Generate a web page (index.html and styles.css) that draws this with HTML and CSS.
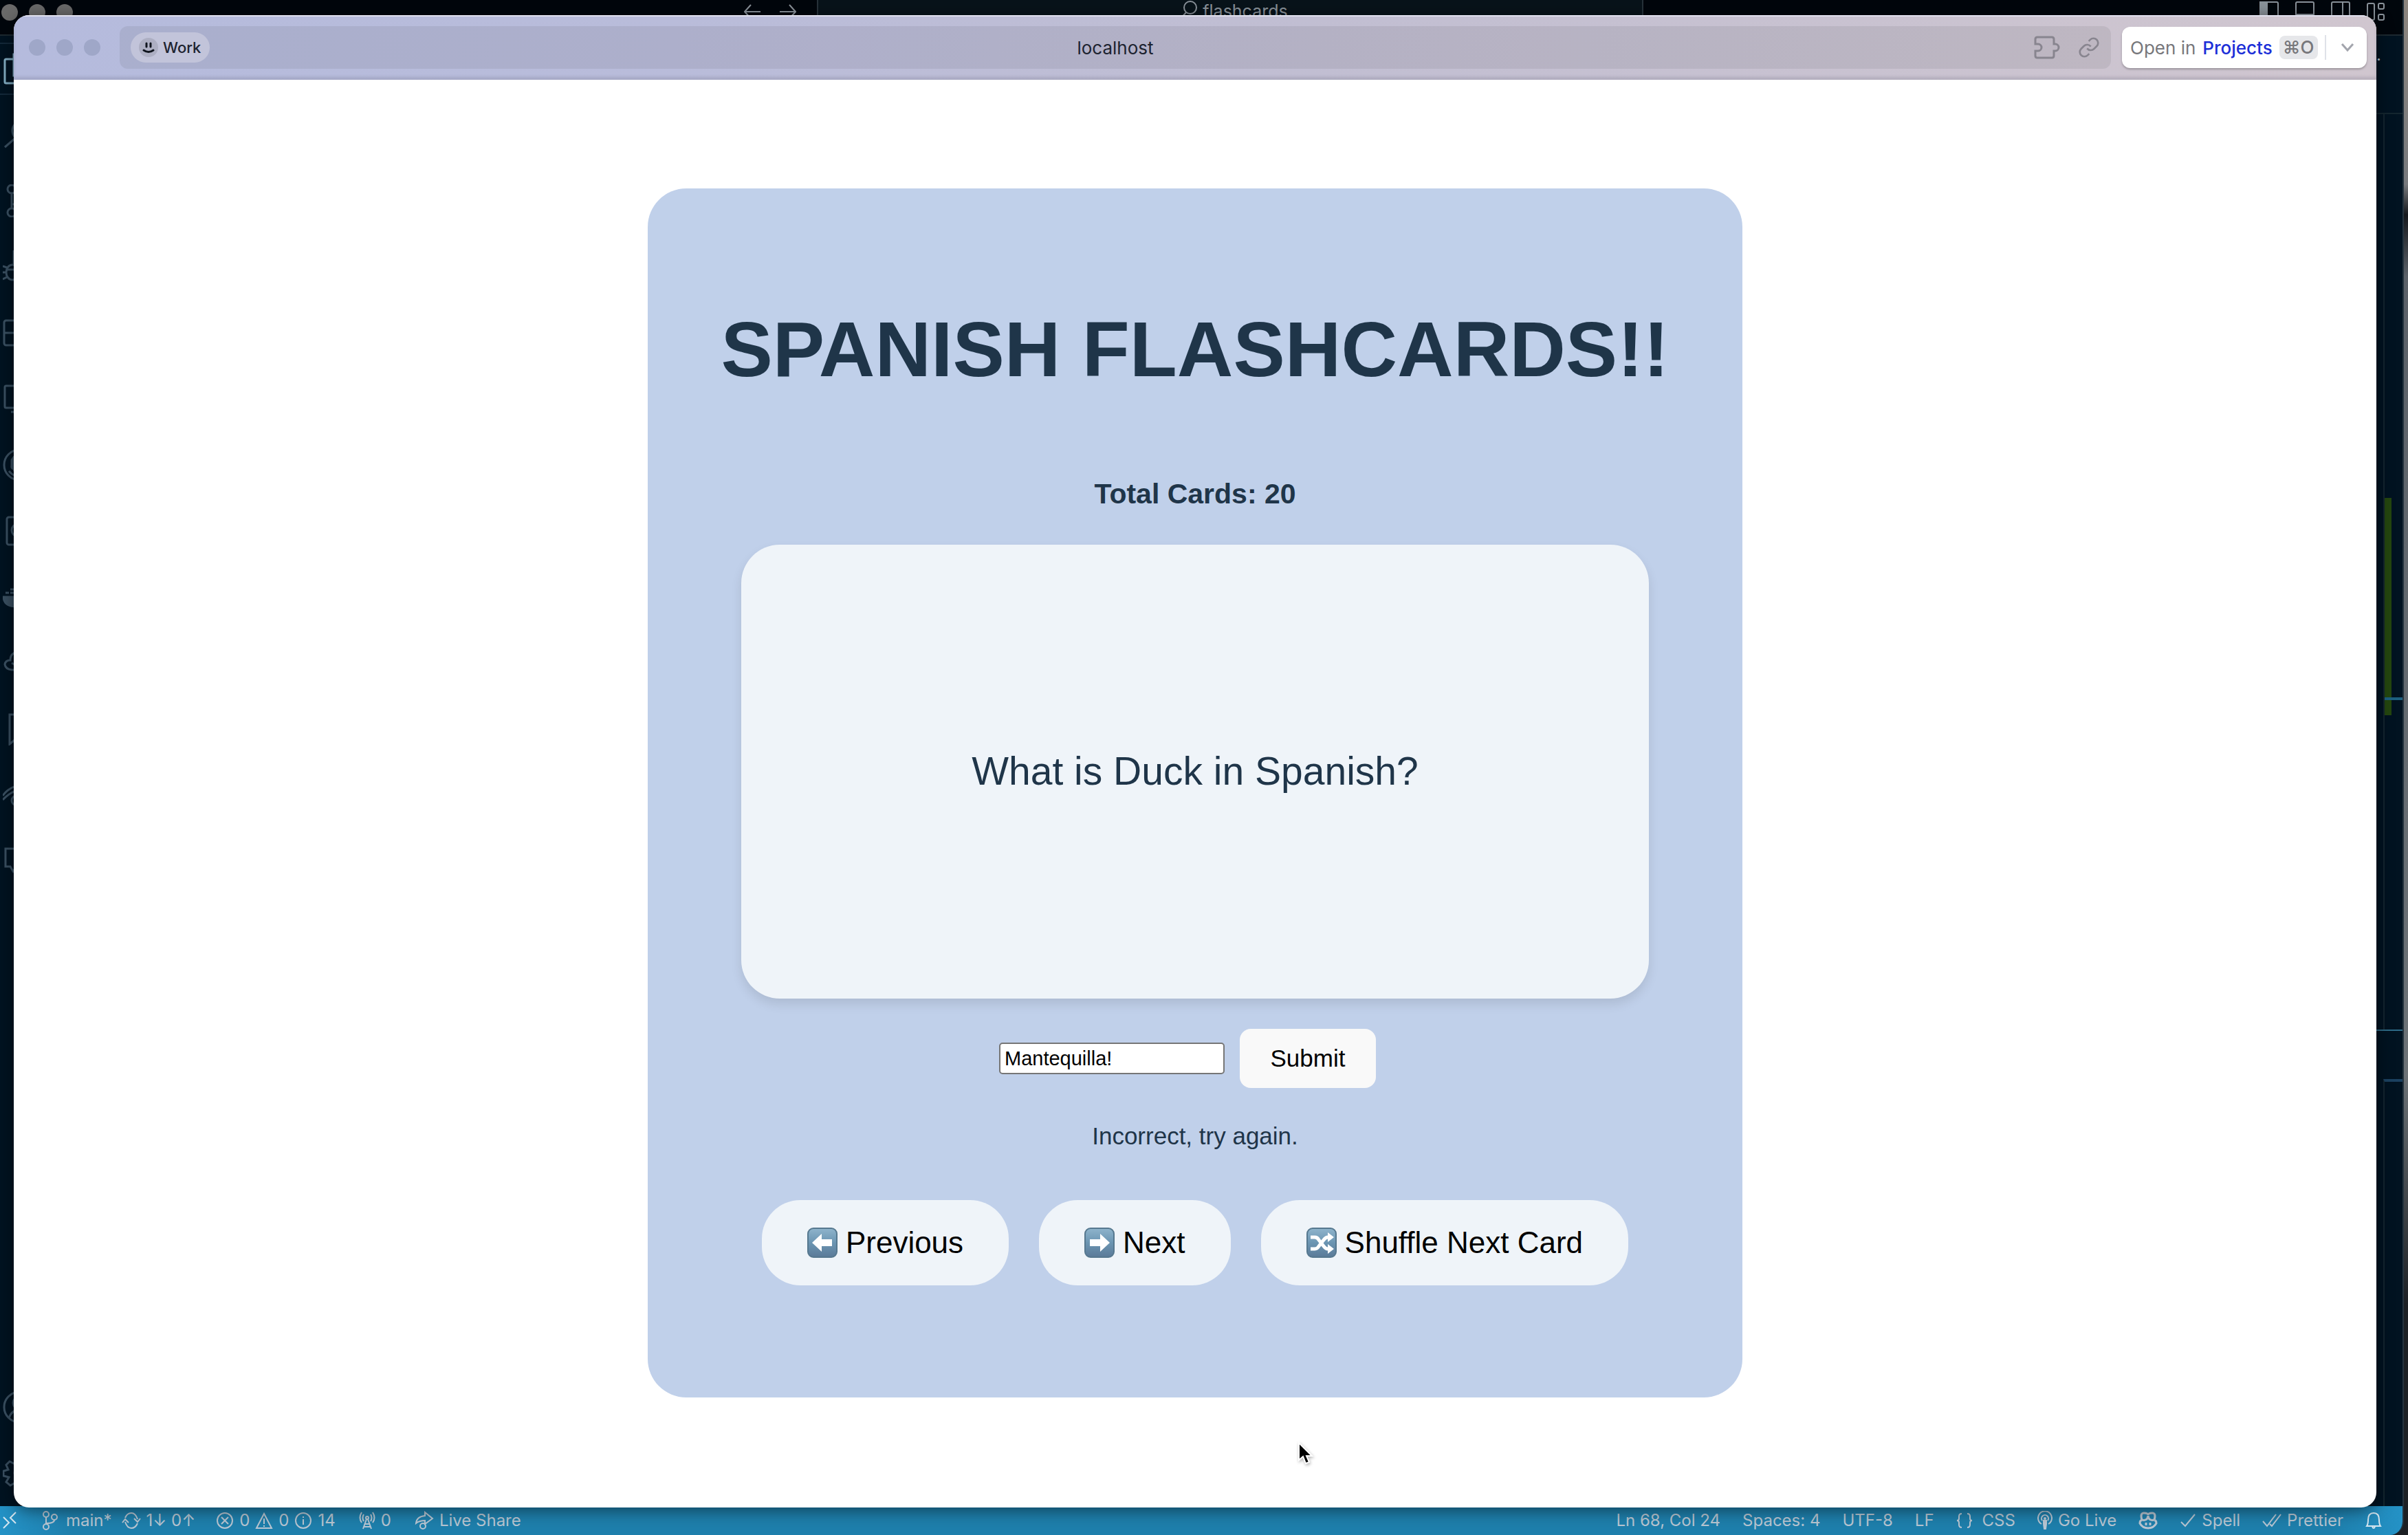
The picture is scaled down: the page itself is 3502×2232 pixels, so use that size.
FILE: index.html
```html
<!DOCTYPE html>
<html lang="en">
<head>
<meta charset="utf-8">
<title>localhost</title>
<meta name="viewport" content="width=device-width, initial-scale=1">
<link rel="stylesheet" href="styles.css">
</head>
<body>
<div class="editor">
  <header class="editor-title">
    <div class="lights"><i></i><i></i><i></i></div>
    <div class="editor-nav">
      <svg width="24" height="24" viewBox="0 0 24 24"><path d="M10 2 1 12l9 10M1 12h23"/></svg>
      <svg width="24" height="24" viewBox="0 0 24 24"><path d="m14 2 9 10-9 10M23 12H0"/></svg>
    </div>
    <div class="command-center">
      <svg width="24" height="28" viewBox="0 0 24 28"><circle cx="14" cy="11" r="9"/><path d="M8 18 1 26"/></svg>
      <span>flashcards</span>
    </div>
    <div class="layout-icons">
      <svg width="28" height="28" viewBox="0 0 28 28"><rect x="1" y="1" width="26" height="26" rx="2"/><path class="solid" d="M1 1h10v26H1z"/></svg>
      <svg width="28" height="28" viewBox="0 0 28 28"><rect x="1" y="1" width="26" height="26" rx="2"/><path d="M1 19h26"/></svg>
      <svg width="28" height="28" viewBox="0 0 28 28"><rect x="1" y="1" width="26" height="26" rx="2"/><path d="M17 1v26"/></svg>
      <svg width="28" height="28" viewBox="0 0 28 28"><rect x="1" y="3" width="10" height="24" rx="2"/><rect x="17" y="3" width="8" height="8" rx="2"/><rect x="17" y="19" width="8" height="8" rx="2"/></svg>
    </div>
  </header>
  <div class="editor-body">
    <nav class="rail">
      <div class="rail-item active"><svg viewBox="0 0 48 48"><path d="M16 10H5q-2 0-2 2v31q0 2 2 2h26V34M16 34V3h16l10 10v21z"/></svg></div>
      <div class="rail-item"><svg viewBox="0 0 48 48"><circle cx="28" cy="18" r="14"/><path d="M18 29 3 42"/></svg></div>
      <div class="rail-item"><svg viewBox="0 0 48 48"><circle cx="13" cy="7" r="6"/><circle cx="13" cy="41" r="6"/><circle cx="36" cy="14" r="6"/><path d="M13 13v22M36 20q0 9-23 9"/></svg></div>
      <div class="rail-item"><svg viewBox="0 0 48 48"><ellipse cx="14" cy="32" rx="9" ry="11"/><path d="M6 25 0 23M5 32H0M6 39l-6 3M6 28h16M16 20V2l26 17-13 9"/></svg></div>
      <div class="rail-item"><svg viewBox="0 0 48 48"><rect x="2" y="6" width="42" height="36" rx="3"/><path d="M2 24h42M23 6v36"/></svg></div>
      <div class="rail-item"><svg viewBox="0 0 48 48"><rect x="3" y="5" width="42" height="32" rx="2"/><path d="M12 43h24"/></svg></div>
      <div class="rail-item"><svg viewBox="0 0 48 48"><circle cx="24" cy="24" r="22"/><path class="solid" d="M13 17q4-8 11-8v28q-6 0-8-7-4-1-3-6z"/><path d="M9 33q5 6 11 7"/></svg></div>
      <div class="rail-item"><svg viewBox="0 0 48 48"><rect x="6" y="4" width="36" height="40" rx="3"/><circle cx="22" cy="23" r="9"/></svg></div>
      <div class="rail-item"><svg viewBox="0 0 48 48"><path class="solid" d="M1 24h41q-2 14-22 14Q2 38 1 24z"/><path d="M4 18h5M11 18h5M11 13h5"/></svg></div>
      <div class="rail-item"><svg viewBox="0 0 48 48"><path d="M13 34q-9-1-10-8 1-6 8-6 0-12 13-12 11 0 13 10 8 1 8 8t-8 8zM13 24l5 3"/></svg></div>
      <div class="rail-item"><svg viewBox="0 0 48 48"><path d="M10 3h24v42l-12-9-12 10z"/></svg></div>
      <div class="rail-item"><svg viewBox="0 0 48 48"><path d="M0 25Q11 9 35 9M0 31Q15 15 35 15"/><circle cx="20" cy="32" r="7"/></svg></div>
      <div class="rail-item"><svg viewBox="0 0 48 48"><path d="M4 6h40v26H20l-5 7-4-7H4z"/></svg></div>
      <div class="rail-item last"><svg viewBox="0 0 48 48"><circle cx="24" cy="24" r="22"/><circle cx="24" cy="18" r="9"/><path d="M9 40q4-12 15-12t15 12"/></svg></div>
      <div class="rail-item"><svg viewBox="0 0 48 48"><path d="M20 4h8l2 7 7-4 5 6-5 6 8 2v7l-8 2 4 7-6 5-6-4-2 7h-7l-2-7-7 4-6-5 4-7-8-2v-7l7-2-3-7 5-5 8 4z"/><circle cx="24" cy="24" r="7"/></svg></div>
    </nav>
    <aside class="minimap">
      <div class="map-tabs">·</div>
      <div class="map-code"><div class="map-added"></div></div>
      <div class="map-panel-tabs"></div>
      <div class="map-panel"></div>
    </aside>
  </div>
  <footer class="status">
    <div class="status-group">
      <svg class="remote" width="20" height="28" viewBox="0 0 20 28"><path d="m1 9 8 8-8 8M19 2l-8 8 8 8"/></svg>
      <span class="item branch"><svg width="22" height="28" viewBox="0 0 22 28"><circle cx="5" cy="5" r="4"/><circle cx="5" cy="23" r="4"/><circle cx="17" cy="9" r="4"/><path d="M5 9v10M17 13q0 5-12 5"/></svg>main*</span>
      <span class="item sync"><svg width="28" height="28" viewBox="0 0 28 28"><path d="M5 10q3-7 9-7t9 9M23 18q-3 7-9 7t-9-9M1 17l4-5 5 5M18 11l5 5 4-5"/></svg>1↓ 0↑</span>
      <span class="item problems"><svg width="26" height="26" viewBox="0 0 26 26"><circle cx="13" cy="13" r="11"/><path d="m8 8 10 10M18 8 8 18"/></svg>0
        <svg width="26" height="26" viewBox="0 0 26 26"><path d="M13 3 2 24h22zM13 10v8M13 20v2"/></svg>0
        <svg width="26" height="26" viewBox="0 0 26 26"><circle cx="13" cy="13" r="11"/><path d="M13 11v8M13 7v2"/></svg>14</span>
      <span class="item ports"><svg width="24" height="26" viewBox="0 0 24 26"><circle cx="12" cy="9" r="2"/><path d="m11 11-5 14M13 11l5 14M9 18h6M8 22h8M7 4q-3 5 0 10M17 4q3 5 0 10M4 1q-5 8 0 15M20 1q5 8 0 15"/></svg>0</span>
      <span class="item share"><svg width="28" height="28" viewBox="0 0 28 28"><path d="M2 18Q3 8 15 7V2l11 9-11 8v-5Q7 14 2 18z"/><circle cx="12" cy="22" r="4"/></svg>Live Share</span>
    </div>
    <div class="status-group right">
      <span>Ln 68, Col 24</span>
      <span>Spaces: 4</span>
      <span>UTF-8</span>
      <span>LF</span>
      <span class="item lang"><svg width="24" height="24" viewBox="0 0 24 24"><path d="M8 2Q4 2 4 6v3q0 3-3 3 3 0 3 3v3q0 4 4 4M16 2q4 0 4 4v3q0 3 3 3-3 0-3 3v3q0 4-4 4"/></svg>CSS</span>
      <span class="item"><svg width="22" height="28" viewBox="0 0 22 28"><path d="M6 19a10 10 0 1 1 10 0M7 14a5 5 0 1 1 8 0"/><path class="solid" d="M9 14h4v5l-1 7h-2l-1-7z"/><circle cx="11" cy="11" r="1"/></svg>Go Live</span>
      <svg width="28" height="28" viewBox="0 0 28 28"><path class="heavy" d="M5 13Q2 3 8 3q6 0 6 3 0-3 6-3t3 10M5 13q-3 1-3 5 4 7 12 7t12-7q0-4-3-5M5 13q8 2 9-6 1 8 9 6M11 17v4M17 17v4"/></svg>
      <span class="item"><svg width="24" height="24" viewBox="0 0 24 24"><path d="m2 14 6 6L22 3"/></svg>Spell</span>
      <span class="item"><svg width="28" height="24" viewBox="0 0 28 24"><path d="m1 13 6 7L20 3M11 17l3 3L27 3"/></svg>Prettier</span>
      <svg class="bell" width="24" height="28" viewBox="0 0 24 28"><path d="M2 22q2-3 2-9 0-10 8-10t8 10q0 6 2 9zM10 23q2 4 4 0"/></svg>
    </div>
  </footer>
</div>

<div class="browser">
  <header class="toolbar">
    <div class="lights"><i></i><i></i><i></i></div>
    <div class="address">
      <button class="space" type="button"><svg width="28" height="28" viewBox="0 0 28 28"><circle cx="14" cy="14" r="14"/><path d="M11 8v5M17 8v5M7 18q7 5 14 0"/></svg>Work</button>
      <span class="host">localhost</span>
      <div class="address-tools">
        <svg width="40" height="34" viewBox="0 0 40 34"><path d="M2 12V5q0-3 3-3h21q3 0 3 3v7h2a5 5 0 1 1 0 10h-2v7q0 3-3 3H5q-3 0-3-3v-7h4a5 5 0 0 0 0-10z"/></svg>
        <svg width="32" height="32" viewBox="0 0 24 24"><path d="M10 13a5 5 0 0 0 7.540.540l3-3a5 5 0 0 0-7.070-7.070l-1.720 1.710M14 11a5 5 0 0 0-7.540-.540l-3 3a5 5 0 0 0 7.070 7.070l1.710-1.710"/></svg>
      </div>
    </div>
    <button class="open-in" type="button"><span>Open in</span><b>Projects</b><kbd>⌘O</kbd><i></i><svg width="20" height="14" viewBox="0 0 20 14"><path d="m2 2 8 9 8-9"/></svg></button>
  </header>
  <main class="page">
    <section class="deck">
      <h1>SPANISH FLASHCARDS!!</h1>
      <h2>Total Cards: 20</h2>
      <article class="flashcard">What is Duck in Spanish?</article>
      <form class="guess">
        <input type="text" value="Mantequilla!" aria-label="Your answer">
        <button type="button">Submit</button>
      </form>
      <p class="feedback">Incorrect, try again.</p>
      <div class="controls">
        <button type="button"><svg width="44" height="44" viewBox="0 0 44 44"><use href="#tile"/><path d="M7 22 21 9v8h15v10H21v8z"/></svg>Previous</button>
        <button type="button"><svg width="44" height="44" viewBox="0 0 44 44"><use href="#tile"/><path d="M37 22 23 9v8H8v10h15v8z"/></svg>Next</button>
        <button type="button"><svg width="44" height="44" viewBox="0 0 44 44"><use href="#tile"/><path class="line" d="M6 14h6q4 0 6 4l7 9q3 4 6 4h2M6 31h6q4 0 6-4l7-9q3-4 6-4h2"/><path d="m31 7 9 7-9 7zM31 24l9 7-9 7z"/></svg>Shuffle Next Card</button>
      </div>
    </section>
  </main>
</div>

<svg class="pointer" width="24" height="36" viewBox="0 0 24 36"><path d="M2 2v25l6-5 4 10 5-2-4-9h8z"/></svg>

<svg class="defs" width="0" height="0" aria-hidden="true">
  <defs>
    <linearGradient id="steel" x1="0" y1="0" x2="0" y2="1">
      <stop offset="0" stop-color="#8fb4cc"/><stop offset="0.500" stop-color="#6b95b2"/><stop offset="1" stop-color="#5b7a98"/>
    </linearGradient>
    <g id="tile"><rect x="1" y="1" width="42" height="42" rx="8" fill="url(#steel)" stroke="#56788f" stroke-width="2"/></g>
  </defs>
</svg>
</body>
</html>
```
FILE: styles.css
```css
* {
  box-sizing: border-box;
}

body {
  margin: 0;
  height: 100vh;
  position: relative;
  overflow: hidden;
  background: linear-gradient(#8c857e 0, #77797c 12%, #15181c 14%, #5b6168 18%, #6c7276 70%, #1c2024 85%);
  font-family: Inter, "Noto Sans", sans-serif;
}

svg {
  flex: none;
  fill: none;
  stroke: currentColor;
  stroke-width: 2;
}

.solid {
  fill: currentColor;
}

.defs {
  position: absolute;
}

.lights {
  display: flex;
  gap: 16px;
}

.lights i {
  width: 24px;
  height: 24px;
  border-radius: 50%;
  background: #9fa7c8;
}

/* Code editor behind the browser window */
.editor {
  height: 100%;
  margin-right: 6px;
  display: flex;
  flex-direction: column;
  background: #011321;
  border-right: 2px solid #24333e;
  border-radius: 0 0 20px 0;
  overflow: hidden;
}

.editor-title {
  flex: none;
  height: 52px;
  display: flex;
  align-items: flex-start;
  justify-content: space-between;
  padding: 0 24px 0 2px;
  background: #00060c;
  border-bottom: 2px solid #1d2930;
  color: #8a929a;
}

.editor-title .lights {
  padding-top: 6px;
  flex: 1;
}

.editor-title .lights i {
  background: #6a6a6a;
}

.editor-nav {
  display: flex;
  gap: 28px;
  padding: 5px 30px 0 0;
}

.command-center {
  width: 1202px;
  height: 44px;
  padding-left: 12px;
  display: flex;
  justify-content: center;
  gap: 8px;
  border: 2px solid #27323a;
  border-top: 0;
  background: #08131a;
  font-size: 25px;
  line-height: 32px;
}

.layout-icons {
  flex: 1;
  min-width: 1000px;
  display: flex;
  justify-content: flex-end;
  gap: 24px;
  padding-top: 2px;
}

.editor-body {
  flex: 1;
  min-height: 0;
  display: flex;
  justify-content: space-between;
}

.rail {
  width: 56px;
  display: flex;
  flex-direction: column;
  color: #3a5062;
}

.rail-item {
  height: 96px;
  display: grid;
  place-items: center;
}

.rail-item svg {
  width: 48px;
  height: 48px;
  stroke-width: 3;
}

.rail-item.active {
  height: 76px;
  margin: 10px 0;
  border: solid #14293a;
  border-width: 2px 0;
  color: #83aec4;
}

.rail-item.last {
  margin-top: auto;
}

.minimap {
  width: 40px;
  display: flex;
  flex-direction: column;
}

.map-tabs {
  height: 114px;
  padding-left: 2px;
  border-bottom: 2px solid #14262f;
  color: #b8c4cc;
  font-size: 24px;
  line-height: 70px;
}

.map-code {
  height: 1331px;
  margin-left: 12px;
  padding-top: 558px;
  border-left: 2px solid #14262f;
}

.map-added {
  width: 10px;
  height: 316px;
  padding-top: 290px;
  background: #24460f;
}

.map-added::before {
  content: "";
  display: block;
  width: 28px;
  height: 4px;
  background: #1d6080;
}

.map-panel-tabs {
  height: 72px;
  border-top: 2px solid #2e6c88;
}

.map-panel {
  flex: 1;
  margin-left: 12px;
  border-left: 2px solid #14262f;
  border-top: 4px solid #1b4160;
}

.status {
  flex: none;
  height: 42px;
  display: flex;
  align-items: center;
  justify-content: space-between;
  padding: 0 30px 0 4px;
  background: linear-gradient(90deg, #2492c6 0, #1e7fac 3%, #1e7fac 97%, #2492c6 100%);
  color: #b9c6d2;
  font-size: 24px;
  line-height: 30px;
}

.status-group {
  display: flex;
  align-items: center;
}

.status-group.right {
  gap: 32px;
}

.item {
  display: flex;
  align-items: center;
  gap: 8px;
  white-space: nowrap;
}

.remote,
.bell {
  color: #d5e6f0;
}

.branch {
  margin-left: 38px;
  gap: 12px;
}

.sync {
  margin-left: 14px;
}

.problems {
  margin-left: 30px;
}

.ports,
.share {
  margin-left: 34px;
}

.lang {
  gap: 14px;
}

.heavy {
  stroke-width: 3;
}

/* Browser window */
.browser {
  position: absolute;
  inset: 22px 46px 40px 20px;
  display: flex;
  flex-direction: column;
  background: #fff;
  border-radius: 22px;
  box-shadow: 0 4px 24px rgba(0, 0, 0, 0.5);
  overflow: hidden;
}

.toolbar {
  flex: none;
  height: 94px;
  display: flex;
  align-items: center;
  padding: 0 14px 0 22px;
  background: linear-gradient(90deg, #b5bbdd 0, #b9bcda 28%, #c1bed2 55%, #d0c6cf 100%);
  box-shadow: inset 0 2px 0 #e1e1ee, inset 0 -4px 4px rgba(90, 90, 110, 0.2);
}

.address {
  flex: 1;
  height: 62px;
  margin: 0 16px 0 28px;
  padding: 0 16px;
  display: grid;
  grid-template-columns: 1fr auto 1fr;
  align-items: center;
  border-radius: 12px;
  background: rgba(70, 70, 80, 0.1);
  color: #1d2330;
  font-size: 26px;
}

.space {
  justify-self: start;
  height: 44px;
  padding: 0 13px 0 12px;
  display: flex;
  align-items: center;
  gap: 7px;
  border: 0;
  border-radius: 22px;
  background: #c2c4da;
  color: #1d2330;
  font: 500 22px Inter, sans-serif;
}

.space circle {
  fill: #adafc3;
  stroke: none;
}

.space svg {
  color: #10151f;
  stroke-width: 3;
  stroke-linecap: round;
}

.address-tools {
  justify-self: end;
  display: flex;
  align-items: center;
  gap: 24px;
  color: #88858f;
}

.address-tools svg {
  stroke-width: 3;
}

.address-tools svg + svg {
  stroke-width: 2;
}

.open-in {
  height: 60px;
  padding: 0 18px 0 12px;
  display: flex;
  flex: 0 0 356px;
  align-items: center;
  gap: 10px;
  border: 0;
  border-radius: 12px;
  background: #fff;
  box-shadow: 0 2px 3px rgba(0, 0, 0, 0.25);
  color: #77777b;
  font: 26px Inter, sans-serif;
  white-space: nowrap;
}

.open-in b {
  color: #1c2fd8;
  font-weight: 500;
}

.open-in kbd {
  width: 56px;
  height: 34px;
  border-radius: 8px;
  background: #e6e7ea;
  color: #77777b;
  font: 500 26px/34px Inter, sans-serif;
}

.open-in i {
  width: 2px;
  height: 36px;
  background: #dfe2e8;
}

.open-in svg {
  margin-left: auto;
  color: #a3a5ad;
  stroke-width: 3;
}

.page {
  flex: 1;
  padding-top: 158px;
  display: flex;
  justify-content: center;
  align-items: flex-start;
  font-family: "Liberation Sans", Arial, sans-serif;
  color: #1f3549;
}

.deck {
  padding: 170px 106px 163px;
  display: flex;
  flex-direction: column;
  align-items: center;
  border-radius: 56px;
  background: #c0d0ea;
}

h1 {
  margin: 0;
  font-size: 113px;
  line-height: 128px;
}

h2 {
  margin: 122px 0 50px;
  font-size: 41px;
  line-height: 48px;
}

.flashcard {
  width: 1320px;
  height: 660px;
  padding-bottom: 2px;
  display: grid;
  place-items: center;
  border-radius: 56px;
  background: #eff4f9;
  box-shadow: 0 8px 16px rgba(0, 0, 0, 0.1);
  font-size: 57px;
}

.guess {
  margin: 44px 0 0;
  display: flex;
  align-items: center;
  gap: 22px;
  padding-right: 22px;
}

.guess input {
  width: 328px;
  height: 46px;
  padding: 2px 6px;
  border: 2px solid #767676;
  border-radius: 5px;
  background: #fff;
  color: #000;
  font: 29px "Liberation Sans", Arial, sans-serif;
}

.guess button {
  width: 198px;
  height: 86px;
  border: 0;
  border-radius: 16px;
  background: #f9f9f9;
  color: #000;
  font: 35px "Liberation Sans", Arial, sans-serif;
}

.feedback {
  margin: 50px 0 73px;
  font-size: 35px;
  line-height: 40px;
}

.controls {
  display: flex;
  gap: 44px;
}

.controls button {
  height: 124px;
  padding: 0 66px;
  display: flex;
  align-items: center;
  gap: 12px;
  border: 0;
  border-radius: 56px;
  background: #eff4f9;
  color: #000;
  font: 44px "Liberation Sans", Arial, sans-serif;
}

.controls path {
  fill: #fff;
  stroke: none;
}

.controls .line {
  fill: none;
  stroke: #fff;
  stroke-width: 5;
}

.pointer {
  position: absolute;
  left: 1887px;
  top: 2096px;
  filter: drop-shadow(1px 2px 2px rgba(0, 0, 0, 0.3));
}

.pointer path {
  fill: #000;
  stroke: #fff;
}
```
